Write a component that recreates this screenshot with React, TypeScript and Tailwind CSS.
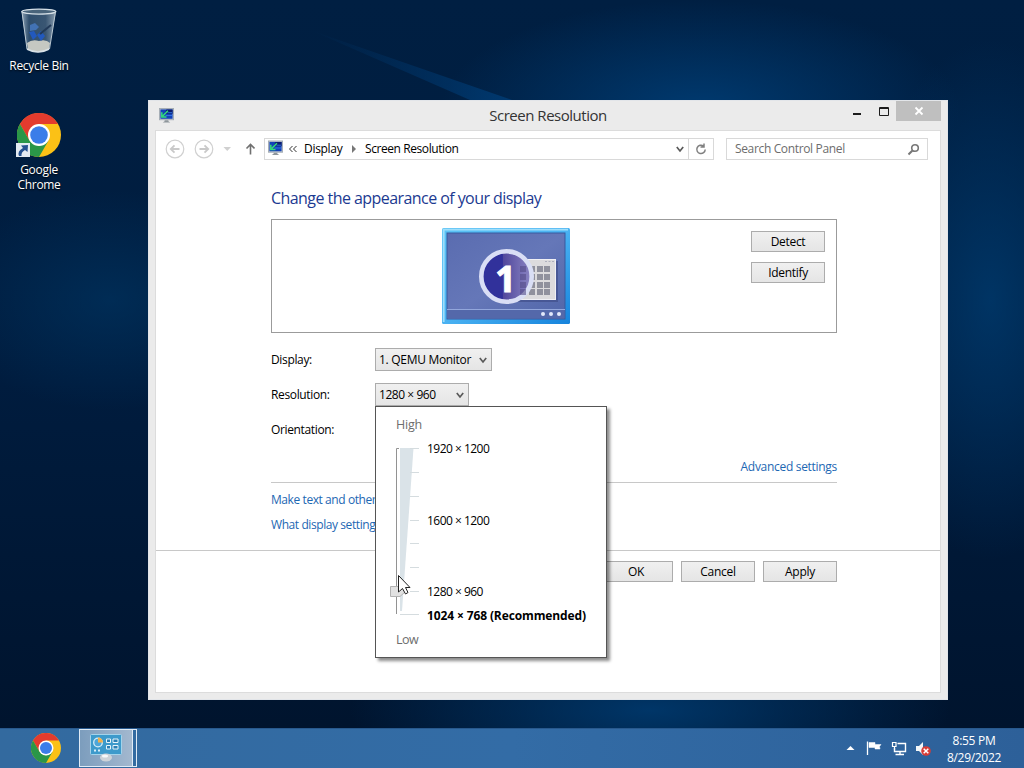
import { ReactNode } from 'react';

const ChromeLogo = ({ className }: { className: string }) => (
  <svg viewBox="0 0 48 48" className={className}>
    <circle cx="24" cy="24" r="24" fill="#fbc116" />
    <path d="M3.2 12 A24 24 0 0 1 44.8 12 L24 12 L13.6 30 Z" fill="#e33b2e" />
    <path d="M3.2 12 A24 24 0 0 0 24 48 L34.4 30 L24 36 L13.6 30 Z" fill="#2a9648" />
    <circle cx="24" cy="24" r="12" fill="#fff" />
    <circle cx="24" cy="24" r="9.6" fill="#3b7de9" />
  </svg>
);

const RecycleBin = () => (
  <svg viewBox="0 0 38 46" className="w-[38px] h-[46px]">
    <defs>
      <linearGradient id="glass" x1="0" x2="1">
        <stop offset="0" stopColor="#a9bccb" stopOpacity=".85" />
        <stop offset=".22" stopColor="#3b5a78" stopOpacity=".8" />
        <stop offset=".7" stopColor="#48647f" stopOpacity=".8" />
        <stop offset="1" stopColor="#a3b5c3" stopOpacity=".85" />
      </linearGradient>
    </defs>
    <path d="M1.5 3 L7 42 Q18 48 29 42 L36 3 Z" fill="url(#glass)" />
    <path d="M7 35 Q12 31 19 33 Q26 31 30 35 L29 41 Q18 47 8 41 Z" fill="#c5c8c2" />
    <path d="M10 17 l5-2 4 4 -3 3 -6 1z" fill="#4272b4" />
    <path d="M9 24 l5-1 3 5 -4 4z M17 27 l4-4 4 5 -4 5z" fill="#2259be" />
    <path d="M20 26 L31 17" stroke="#223a58" strokeWidth="2" />
    <ellipse cx="18.8" cy="3.6" rx="17" ry="2.5" fill="#49647b" stroke="#d5dfe6" strokeWidth="1.4" />
    <path d="M2 4 L7 41 M35.5 4 L29.5 41" stroke="#bccad4" fill="none" />
    <path d="M7 41 Q18 47 29 41" stroke="#d9e1e6" strokeWidth="1.5" fill="none" />
  </svg>
);

const MonitorIcon = ({ className }: { className: string }) => (
  <svg viewBox="0 0 16 16" className={className}>
    <rect x=".5" y=".5" width="15" height="12" fill="#c9ced3" stroke="#a3acb4" />
    <rect x="1.5" y="1.5" width="13" height="10" fill="#1242b8" />
    <path d="M8 1.5 H14.5 V6 H6 Z" fill="#0b1c6d" />
    <path d="M9 5h5M7 8h7" stroke="#3275e4" />
    <path d="M9.5 3 L4 8.5 M3 4.5 V9.5 H8" stroke="#35dc7a" strokeWidth="1.6" fill="none" />
    <path d="M6 13 h4 v1 l2 1.5 H4 L6 14z" fill="#8e969b" />
  </svg>
);

const NavArrow = ({ back = false }: { back?: boolean }) => (
  <svg viewBox="0 0 20 20" className="w-5 h-5">
    <circle cx="10" cy="10" r="8.8" fill="none" stroke="#d0d0d0" strokeWidth="1.2" />
    <path d={back ? 'M14.5 10H6M9.5 6.3L5.8 10L9.5 13.7' : 'M5.5 10h8.5M10.5 6.3l3.7 3.7L10.5 13.7'} fill="none" stroke="#c9c9c9" strokeWidth="1.8" />
  </svg>
);

const Chevron = () => (
  <svg viewBox="0 0 10 10" className="w-[10px] h-[10px] shrink-0">
    <path d="M1.8 3 L5 7 L8.2 3" fill="none" stroke="#5a5a5a" strokeWidth="1.7" />
  </svg>
);

const DisplayPreview = () => (
  <svg viewBox="0 0 128 96" className="w-32 h-24">
    <defs>
      <linearGradient id="frame" x1="0" y1="0" x2="1" y2="1">
        <stop offset="0" stopColor="#5cc3f5" />
        <stop offset=".5" stopColor="#4ab2f2" />
        <stop offset="1" stopColor="#1683dc" />
      </linearGradient>
      <linearGradient id="panel" x1="0" y1="0" x2="1" y2="1">
        <stop offset="0" stopColor="#5a6cb0" />
        <stop offset=".5" stopColor="#6577b8" />
        <stop offset="1" stopColor="#5166a9" />
      </linearGradient>
      <linearGradient id="disc" x1="0" x2="1">
        <stop offset=".42" stopColor="#31319b" />
        <stop offset=".43" stopColor="#50479c" />
        <stop offset="1" stopColor="#8c86c4" />
      </linearGradient>
    </defs>
    <rect width="128" height="96" rx="1.5" fill="url(#frame)" />
    <path d="M1.7 94V1.7H126" fill="none" stroke="#9fdffc" strokeWidth="1.8" />
    <rect x="5" y="5" width="118" height="86" fill="url(#panel)" stroke="#365b9f" />
    <rect x="5.5" y="82" width="117" height="8.500" fill="#5468aa" />
    <path d="M5 81.5 H123" stroke="#93a7dc" />
    <rect x="62" y="33" width="54" height="41" fill="#3c4a83" opacity=".6" />
    <rect x="60.5" y="31.500" width="53" height="40" fill="#dcdbdd" stroke="#f0f0f4" />
    <path d="M103 33.500h10" stroke="#aeb0bd" strokeDasharray="2 1.500" />
    {[38, 46, 54, 61].map((y) =>
      [79, 87, 95, 102].map((x) => <rect key={`${x}-${y}`} x={x} y={y} width="6" height="6" fill="#90919d" />)
    )}
    <circle cx="64.5" cy="48.500" r="25.200" fill="url(#disc)" stroke="#d9def5" strokeWidth="4.600" />
    {[38, 46, 54, 61].map((y) => (
      <rect key={y} x="78" y={y} width="6" height="6" fill="#554c88" opacity=".6" />
    ))}
    <text x="63.500" y="64" fontSize="36" fontWeight="700" fontFamily="Open Sans" fill="#fff" stroke="#fff" textAnchor="middle">1</text>
    {[101, 109, 117].map((x) => <circle key={x} cx={x} cy="86" r="2" fill="#e3e9fb" />)}
  </svg>
);

const ControlPanelIcon = () => (
  <svg viewBox="0 0 32 30" className="w-8 h-[30px]">
    <rect x=".5" y="1.5" width="31" height="20" rx="1" fill="#3d9acb" stroke="#a3d3ea" />
    <circle cx="8" cy="9.5" r="4.3" fill="#4da6d8" stroke="#d5edf8" strokeWidth="1.3" />
    <path d="M8 9.5 V4.5 A5 5 0 0 1 13 9.5 Z" fill="#f2b04c" />
    <path d="M16.5 6h4v3.500h-4zM23 6h5v3.500h-5zM16.500 12.500h4V16h-4zM23 12.500h5V16h-5z" fill="#2b80b5" stroke="#e6f4fa" />
    <path d="M4 17.500h2M8 17.500h2" stroke="#d7eef9" strokeWidth="2" />
    <ellipse cx="16" cy="24.500" rx="6" ry="4" fill="#cdd3d8" />
    <ellipse cx="15" cy="23" rx="3" ry="1.500" fill="#f6f8f9" />
  </svg>
);

const TrayIcons = () => (
  <svg viewBox="0 0 90 20" className="w-[90px] h-5">
    <path d="M2.500 12 L6.500 8 L10.500 12Z" fill="#fff" />
    <g fill="none" stroke="#fff">
      <path d="M23.500 3.500V17" strokeWidth="1.300" />
      <path d="M25 4.500H31V6.500H37L35.500 8.500L36 11H31V9.500H25Z" fill="#fff" strokeWidth=".5" />
      <path d="M53.500 5.500H61.500V13.500H50.500V10M56 14V16.500M51.500 16.500H60" strokeWidth="1.400" />
      <path d="M48.500 4.500H52V8.500H48.500ZM50.500 9V12" strokeWidth="1.200" />
    </g>
    <path d="M72 8H75L79 4V17L75 13H72Z" fill="#f3f6f8" />
    <circle cx="82" cy="13" r="4.800" fill="#d83c36" />
    <path d="M79.700 10.700L84.300 15.300M84.300 10.700L79.700 15.300" stroke="#fff" strokeWidth="1.500" />
  </svg>
);

const Button = ({ children }: { children: ReactNode }) => (
  <button className="w-[74px] h-[21px] border border-[#acacac] bg-gradient-to-b from-[#f0f0f0] to-[#e5e5e5] flex items-center justify-center">
    {children}
  </button>
);

const Select = ({ children, className }: { children: ReactNode; className: string }) => (
  <div className={`h-[23px] border border-[#acacac] bg-gradient-to-b from-[#f0f0f0] to-[#e5e5e5] flex items-center justify-between px-[3px] ${className}`}>
    <span>{children}</span>
    <Chevron />
  </div>
);

const ResolutionPopup = () => (
  <div className="absolute top-[23px] left-0 z-10 w-[232px] h-[252px] bg-white border border-[#555] shadow-[3px_3px_3px_rgba(0,0,0,0.45)] tracking-[-0.52px]">
    <span className="absolute left-5 top-[10px] text-[#6d6d6d] text-[12.5px] tracking-[-0.2px]">High</span>
    <svg viewBox="0 0 40 180" className="absolute left-3 top-9 w-10 h-[180px]">
      <path d="M11 5.500H8.500V171" fill="none" stroke="#929292" />
      <path d="M12 5H25.500L14 168H12Z" fill="#dae3e8" />
      {[5.5, 29.5, 53.5, 77.5, 100.5, 124.5, 148.5, 171.5].map((y, i) => (
        <path key={y} d={`M${i === 7 ? 12 : 22} ${y}H31`} stroke="#d5dcdf" />
      ))}
      <path d="M2.500 143.500H12L17.500 148.500L12 153.500H2.500Z" fill="#e1e1e1" stroke="#b2b2b2" />
      <path d="M10.500 132.500V149L14.500 145.500L17.500 151L20 149.500L17.500 144.500H22Z" fill="#fff" stroke="#222" />
    </svg>
    <span className="absolute left-[51px] top-[34px]">1920 × 1200</span>
    <span className="absolute left-[51px] top-[106px]">1600 × 1200</span>
    <span className="absolute left-[51px] top-[177px]">1280 × 960</span>
    <span className="absolute left-[51px] top-[201px] font-bold tracking-[-0.12px]">1024 × 768 (Recommended)</span>
    <span className="absolute left-5 top-[225px] text-[#6d6d6d] text-[12.5px]">Low</span>
  </div>
);

const TitleBar = () => (
  <div className="relative h-[29px] flex items-start justify-center">
    <MonitorIcon className="absolute left-[10px] top-[7px] w-[15px] h-[15px]" />
    <h1 className="mt-1 text-[15px] leading-5 tracking-[-0.48px] text-[#333]">Screen Resolution</h1>
    <div className="absolute right-[6px] top-0 flex h-5 items-center">
      <svg viewBox="0 0 44 20" className="w-11 h-5">
        <path d="M1 13H9" stroke="#1c1c1c" strokeWidth="2" />
        <path d="M27.500 6.500H36.500V14.500H27.500Z M27 7.500H37" fill="none" stroke="#1c1c1c" />
      </svg>
      <div className="w-[45px] h-5 bg-[#bfbfbf] flex items-center justify-center">
        <svg viewBox="0 0 10 10" className="w-[10px] h-[10px]">
          <path d="M1.500 1.500L8.500 8.500M8.500 1.500L1.500 8.500" stroke="#fff" strokeWidth="1.800" />
        </svg>
      </div>
    </div>
  </div>
);

const AddressRow = () => (
  <div className="flex items-center pt-[7px] pl-[9px]">
    <NavArrow back />
    <div className="ml-[9px]"><NavArrow /></div>
    <svg viewBox="0 0 36 20" className="w-9 h-5 ml-[5px]">
      <path d="M4.500 8H12L8.250 12Z" fill="#d0d0d0" />
      <path d="M31.500 15.500V6M27.500 9.500L31.500 5.500L35.500 9.500" fill="none" stroke="#707070" strokeWidth="1.600" />
    </svg>
    <div className="ml-[9px] w-[450px] h-[22px] border border-[#d9d9d9] flex items-center">
      <MonitorIcon className="ml-[3px] w-[15px] h-4 mb-[2px]" />
      <svg viewBox="0 0 10 10" className="ml-[5px] w-[10px] h-[10px]">
        <path d="M4.500 2L1.500 5L4.500 8M8.500 2L5.500 5L8.500 8" fill="none" stroke="#333" />
      </svg>
      <span className="ml-[6px] w-[39px] whitespace-nowrap">Display</span>
      <svg viewBox="0 0 6 8" className="ml-2 w-[6px] h-2"><path d="M1 0L5 4L1 8Z" fill="#777" /></svg>
      <span className="ml-2 tracking-[-0.42px]">Screen Resolution</span>
      <div className="ml-auto mr-[3px]"><Chevron /></div>
      <div className="w-[25px] h-full border-l border-[#d9d9d9] flex items-center justify-center">
        <svg viewBox="0 0 12 12" className="w-3 h-3">
          <path d="M8.500 3A4.200 4.200 0 1 0 10.200 6.500M9 .5V4H5.500" fill="none" stroke="#808080" strokeWidth="1.500" />
        </svg>
      </div>
    </div>
    <div className="ml-3 w-[202px] h-[22px] border border-[#d9d9d9] flex items-center justify-between pl-2 pr-[7px] text-[#6d6d6d]">
      <span className="tracking-[-0.35px]">Search Control Panel</span>
      <svg viewBox="0 0 13 13" className="w-[13px] h-[13px]">
        <circle cx="8" cy="5" r="3.300" fill="none" stroke="#777" strokeWidth="1.600" />
        <path d="M5.700 7.300L1.500 11.500" stroke="#777" strokeWidth="2" />
      </svg>
    </div>
  </div>
);

export default function App() {
  return (
    <div className="relative w-[1024px] h-[768px] overflow-hidden text-[12px] leading-4 tracking-[-0.3px] text-black font-['Open_Sans',sans-serif] bg-[radial-gradient(ellipse_260px_110px_at_700px_110px,rgba(0,70,132,0.7),transparent),radial-gradient(ellipse_130px_260px_at_990px_300px,rgba(0,68,125,0.6),transparent),radial-gradient(ellipse_300px_90px_at_650px_710px,rgba(0,62,118,0.8),transparent),radial-gradient(ellipse_170px_110px_at_110px_300px,rgba(0,54,100,0.6),transparent),linear-gradient(180deg,#001f42,#001c3e_50%,#00132c)]">
      {/* light ray falling across the wallpaper */}
      <svg viewBox="0 0 1024 100" className="absolute left-0 top-0 w-[1024px] h-[100px]">
        <defs>
          <linearGradient id="ray" x1="0" x2="1">
            <stop offset="0" stopColor="#00407c" stopOpacity="0" />
            <stop offset="1" stopColor="#00407c" stopOpacity=".7" />
          </linearGradient>
        </defs>
        <path d="M310 30L512 100H470Z" fill="url(#ray)" />
      </svg>

      <div className="absolute left-0 top-2 w-[78px] flex flex-col items-center text-center text-white [text-shadow:0_1px_2px_#000]">
        <RecycleBin />
        <span className="mt-1">Recycle Bin</span>
        <div className="relative mt-[39px]">
          <ChromeLogo className="w-11 h-11" />
          <svg viewBox="0 0 14 14" className="absolute left-0 bottom-0 -ml-px w-[14px] h-[14px]">
            <rect width="14" height="14" fill="#e3eaf1" />
            <path d="M3 13Q1 8 7 5L5 2.500L12 2L11.500 9L9 7Q5 9 5.500 13Z" fill="#24508f" />
          </svg>
        </div>
        <span className="mt-[5px] leading-[15px]">Google<br />Chrome</span>
      </div>

      <div className="absolute left-[148px] top-[100px] w-[800px] h-[600px] bg-[#ebebeb] border border-[#e2e5e9]">
        <TitleBar />
        <div className="mx-[6px] h-[563px] bg-white border border-[#dcdcdc]">
          <AddressRow />
          <div className="ml-[115px] w-[566px] pt-[26px]">
            <h2 className="text-[16px] leading-6 tracking-[-0.56px] text-[#1c3a91]">Change the appearance of your display</h2>
            <div className="mt-[9px] w-[566px] h-[114px] border border-[#9b9b9b] flex items-start">
              <div className="ml-[170px] mt-2"><DisplayPreview /></div>
              <div className="ml-auto mr-[11px] mt-[11px] flex flex-col gap-[10px]">
                <Button>Detect</Button>
                <Button>Identify</Button>
              </div>
            </div>
            <div className="mt-[15px] grid grid-cols-[104px_1fr] gap-y-3 items-center">
              <span className="tracking-[-0.35px]">Display:</span>
              <Select className="w-[117px]">1. QEMU Monitor</Select>
              <span className="tracking-[-0.35px]">Resolution:</span>
              <div className="relative">
                <Select className="w-[94px] tracking-[-0.45px]">1280 × 960</Select>
                <ResolutionPopup />
              </div>
              <span className="h-[23px] leading-[23px] tracking-[-0.35px]">Orientation:</span>
            </div>
            <div className="mt-[18px] h-[24px] border-b border-[#c8c8c8] text-right text-[#1d67b3]">Advanced settings</div>
            <div className="pt-[9px] flex flex-col gap-[9px] text-[#1d67b3] tracking-[-0.42px]">
              <span>Make text and other</span>
              <span>What display settings</span>
            </div>
          </div>
          <div className="mt-[17px] border-t border-[#c8c8c8] pt-[10px] pr-[103px] flex justify-end gap-2">
            <Button>OK</Button>
            <Button>Cancel</Button>
            <Button>Apply</Button>
          </div>
        </div>
      </div>

      <div className="absolute left-0 bottom-0 w-full h-10 bg-gradient-to-r from-[#336a9f] via-[#336ca6] to-[#2d6099] border-t border-[#28598e] flex items-center text-white">
        <ChromeLogo className="ml-[31px] mb-[2px] w-[30px] h-[30px]" />
        <div className="ml-[18px] w-[58px] h-[38px] mb-px border border-[#e0ebf6] flex">
          <div className="w-[53px] h-full border-r border-[#e0ebf6] bg-gradient-to-r from-[#7c9dbd] to-[#a3b8cf] flex items-center justify-center">
            <ControlPanelIcon />
          </div>
        </div>
        <div className="ml-auto mb-[2px]"><TrayIcons /></div>
        <div className="ml-[7px] w-[66px] mr-[17px] text-center leading-[17px] pt-px">
          8:55 PM<br />8/29/2022
        </div>
      </div>
    </div>
  );
}
